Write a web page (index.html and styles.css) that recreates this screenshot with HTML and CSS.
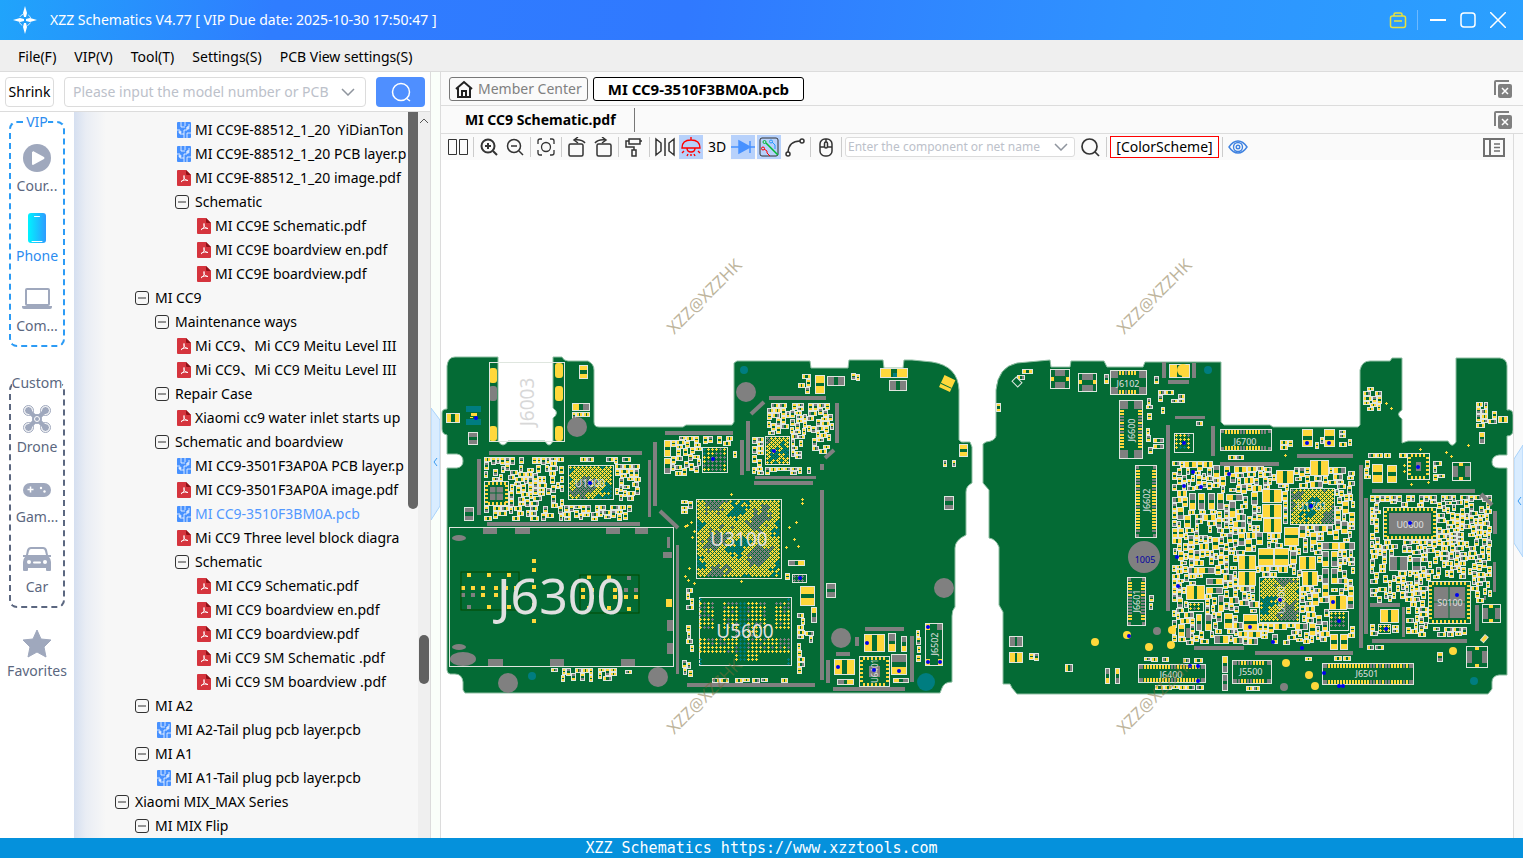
FILE: index.html
```html
<!DOCTYPE html>
<html lang="en">
<head>
<meta charset="utf-8">
<title>XZZ Schematics</title>
<link rel="stylesheet" href="styles.css">
</head>
<body>
<svg class="defs" aria-hidden="true">
  <symbol id="i-pcb" viewBox="0 0 14 16"><rect width="14" height="16" rx="1" fill="#4791ff"/><path d="M4 0v5h4M8 0v4M0 8h3M3 10v2h4V8h3M7 16v-4M10 16v-5h4M12 2v3h-2v3" fill="none" stroke="#fff" stroke-width=".8"/><circle cx="3" cy="10" r="1" fill="none" stroke="#fff"/><circle cx="11" cy="6" r="1" fill="#4791ff" stroke="#fff"/></symbol>
  <symbol id="i-pdf" viewBox="0 0 14 16"><path d="M1 0h8l5 5v10a1 1 0 0 1-1 1H1a1 1 0 0 1-1-1V1a1 1 0 0 1 1-1z" fill="#d5343d"/><path d="M9 0l5 5h-4a1 1 0 0 1-1-1z" fill="#8f1219"/><path d="M7 5.500c1 3-1 5-3 6.500M7 5.500c-1 3 2 5 4 5M4 11.500c2-1.500 4-2 7-1" fill="none" stroke="#fff" stroke-width="1"/></symbol>
  <symbol id="i-minus" viewBox="0 0 14 14"><rect x=".5" y=".5" width="13" height="13" rx="2.5" fill="none" stroke="#333"/><path d="M3 7h8" stroke="#333"/></symbol>
  <symbol id="i-closeall" viewBox="0 0 18 18"><path d="M1 15V2q0-1 1-1h13" fill="none" stroke="#808080" stroke-width="2"/><rect x="4" y="4" width="14" height="14" rx="2" fill="#808080"/><path d="M8 8l6 6m0-6l-6 6" stroke="#fff" stroke-width="1.500"/></symbol>
  <symbol id="i-chev" viewBox="0 0 14 8"><path d="M1 1l6 6 6-6" fill="none" stroke="#8f959e" stroke-width="1.500"/></symbol>
</svg>

<header class="titlebar">
  <svg class="logo" viewBox="0 0 24 30"><path d="M12 1l2 7-1 4h-2l-1-4zM12 29l2-7-1-4h-2l-1 4zM0 15l7-2 4 1v2l-4 1zM24 15l-7-2-4 1v2l4 1z" fill="#fff"/><circle cx="12" cy="15" r="6" fill="none" stroke="#d7ecff" stroke-dasharray="4 5.400" stroke-dashoffset="-2.700"/></svg>
  <h1>XZZ Schematics V4.77 [ VIP Due date: 2025-10-30 17:50:47 ]</h1>
  <div class="winbtns">
    <button aria-label="License"><svg width="18" height="18" viewBox="0 0 18 18" fill="none" stroke="#e9e23c" stroke-width="1.500"><rect x="1.500" y="5" width="15" height="11.500" rx="2"/><path d="M5 5V3.500q0-1.500 1.500-1.500h5q1.500 0 1.500 1.500V5M5 10h8"/></svg></button>
    <i class="winsep"></i>
    <button aria-label="Minimize"><svg width="16" height="16"><path d="M0 8h16" stroke="#fff" stroke-width="2"/></svg></button>
    <button aria-label="Maximize"><svg width="16" height="16"><rect x="1" y="1" width="14" height="14" rx="3" fill="none" stroke="#fff" stroke-width="1.500"/></svg></button>
    <button aria-label="Close"><svg width="16" height="16"><path d="M0 0l16 16M16 0L0 16" stroke="#fff" stroke-width="1.500"/></svg></button>
  </div>
</header>

<nav class="menubar">
  <button>File(F)</button><button>VIP(V)</button><button>Tool(T)</button><button>Settings(S)</button><button>PCB View settings(S)</button>
</nav>

<main class="main">
  <aside class="side">
    <form class="finder">
      <button type="button" class="shrink">Shrink</button>
      <label class="combo"><input aria-label="Model" placeholder="Please input the model number or PCB"><svg width="14" height="8"><use href="#i-chev"/></svg></label>
      <button type="button" class="go" aria-label="Search"><svg width="20" height="20" fill="none" stroke="#fff" stroke-width="1.500"><circle cx="10" cy="10" r="8.500"/><path d="M15 16l4 3"/></svg></button>
    </form>
    <div class="sidebody">
      <div class="rail">
        <fieldset class="group vip">
          <legend>VIP</legend>
          <button><svg viewBox="0 0 30 30"><circle cx="15" cy="15" r="14" fill="#9fa8bd"/><path d="M11 9q-1-1 0-1l11 6q1 1 0 2l-11 6q-1 0-1-1V9z" fill="#fff"/></svg>Cour...</button>
          <button class="on"><svg viewBox="0 0 30 30"><defs><linearGradient id="ph"><stop offset="0" stop-color="#00f3ff"/><stop offset="1" stop-color="#2e9bff"/></linearGradient></defs><rect x="6" y="0" width="18" height="30" rx="3" fill="url(#ph)"/><path d="M12.500 3.500h5M10 28.500h10" stroke="#fff" stroke-linecap="round"/></svg>Phone</button>
          <button><svg viewBox="0 0 30 30"><rect x="4" y="6" width="23" height="16" rx="1" fill="none" stroke="#9fa8bd" stroke-width="2"/><path d="M0 23h30v1q0 2-2 2H2q-2 0-2-2z" fill="#9fa8bd"/></svg>Com...</button>
        </fieldset>
        <fieldset class="group">
          <legend>Custom</legend>
          <button><svg viewBox="0 0 30 30" fill="#9fa8bd"><path d="M6 6l18 18M24 6L6 24" stroke="#9fa8bd" stroke-width="4"/><g stroke="#fff"><circle cx="6.500" cy="6.500" r="4"/><circle cx="23.500" cy="6.500" r="4"/><circle cx="6.500" cy="23.500" r="4"/><circle cx="23.500" cy="23.500" r="4"/></g><g fill="none" stroke="#9fa8bd"><circle cx="6.500" cy="6.500" r="5"/><circle cx="23.500" cy="6.500" r="5"/><circle cx="6.500" cy="23.500" r="5"/><circle cx="23.500" cy="23.500" r="5"/></g><path d="M8 8l14 14M22 8L8 22" stroke="#9fa8bd" stroke-width="4"/><circle cx="15" cy="15" r="5"/><circle cx="15" cy="15" r="2.500" stroke="#fff"/></svg>Drone</button>
          <button><svg viewBox="0 0 30 30"><rect x="1" y="9" width="28" height="14" rx="7" fill="#9fa8bd"/><path d="M5.500 15.500h6M8.500 12.500v6" stroke="#fff" stroke-width="1.500"/><circle cx="19" cy="14" r="1.200" fill="#fff"/><circle cx="22.500" cy="17.500" r="1.200" fill="#fff"/></svg>Gam...</button>
          <button><svg viewBox="0 0 30 30"><path d="M9 3h12q3 0 4 3l1 5h3v2h-2q2 2 2 5v8q0 1-1 1h-3q-1 0-1-1v-2H6v2q0 1-1 1H2q-1 0-1-1v-8q0-3 2-5H1v-2h3l1-5q1-3 4-3z" fill="#9fa8bd"/><path d="M9 5h12q1.500 0 2 2l1 4H6l1-4q.500-2 2-2z" fill="#fff"/><circle cx="7" cy="18" r="2" fill="#fff"/><circle cx="23" cy="18" r="2" fill="#fff"/><path d="M12 18.500h6" stroke="#fff" stroke-width="2" stroke-linecap="round"/></svg>Car</button>
        </fieldset>
        <button class="fav"><svg viewBox="0 0 30 30"><path d="M15 2l4 9 10 1-7 7 2 10-9-5-9 5 2-10-7-7 10-1z" fill="#9fa8bd" stroke="#9fa8bd" stroke-linejoin="round"/></svg>Favorites</button>
      </div>
      <ul class="tree">
        <li class="f d3"><svg><use href="#i-pcb"/></svg>MI CC9E-88512_1_20&nbsp; YiDianTon</li>
        <li class="f d3"><svg><use href="#i-pcb"/></svg>MI CC9E-88512_1_20 PCB layer.p</li>
        <li class="f d3"><svg><use href="#i-pdf"/></svg>MI CC9E-88512_1_20 image.pdf</li>
        <li class="d3"><svg><use href="#i-minus"/></svg>Schematic</li>
        <li class="f d4"><svg><use href="#i-pdf"/></svg>MI CC9E Schematic.pdf</li>
        <li class="f d4"><svg><use href="#i-pdf"/></svg>MI CC9E boardview en.pdf</li>
        <li class="f d4"><svg><use href="#i-pdf"/></svg>MI CC9E boardview.pdf</li>
        <li class="d1"><svg><use href="#i-minus"/></svg>MI CC9</li>
        <li class="d2"><svg><use href="#i-minus"/></svg>Maintenance ways</li>
        <li class="f d3"><svg><use href="#i-pdf"/></svg>Mi CC9、Mi CC9 Meitu Level III</li>
        <li class="f d3"><svg><use href="#i-pdf"/></svg>Mi CC9、Mi CC9 Meitu Level III</li>
        <li class="d2"><svg><use href="#i-minus"/></svg>Repair Case</li>
        <li class="f d3"><svg><use href="#i-pdf"/></svg>Xiaomi cc9 water inlet starts up</li>
        <li class="d2"><svg><use href="#i-minus"/></svg>Schematic and boardview</li>
        <li class="f d3"><svg><use href="#i-pcb"/></svg>MI CC9-3501F3AP0A PCB layer.p</li>
        <li class="f d3"><svg><use href="#i-pdf"/></svg>MI CC9-3501F3AP0A image.pdf</li>
        <li class="f d3 sel"><svg><use href="#i-pcb"/></svg>MI CC9-3510F3BM0A.pcb</li>
        <li class="f d3"><svg><use href="#i-pdf"/></svg>Mi CC9 Three level block diagra</li>
        <li class="d3"><svg><use href="#i-minus"/></svg>Schematic</li>
        <li class="f d4"><svg><use href="#i-pdf"/></svg>MI CC9 Schematic.pdf</li>
        <li class="f d4"><svg><use href="#i-pdf"/></svg>MI CC9 boardview en.pdf</li>
        <li class="f d4"><svg><use href="#i-pdf"/></svg>MI CC9 boardview.pdf</li>
        <li class="f d4"><svg><use href="#i-pdf"/></svg>Mi CC9 SM Schematic .pdf</li>
        <li class="f d4"><svg><use href="#i-pdf"/></svg>Mi CC9 SM boardview .pdf</li>
        <li class="d1"><svg><use href="#i-minus"/></svg>MI A2</li>
        <li class="f d2"><svg><use href="#i-pcb"/></svg>MI A2-Tail plug pcb layer.pcb</li>
        <li class="d1"><svg><use href="#i-minus"/></svg>MI A1</li>
        <li class="f d2"><svg><use href="#i-pcb"/></svg>MI A1-Tail plug pcb layer.pcb</li>
        <li class="d0"><svg><use href="#i-minus"/></svg>Xiaomi MIX_MAX Series</li>
        <li class="d1"><svg><use href="#i-minus"/></svg>MI MIX Flip</li>
      </ul>
      <div class="scroll inner"><i></i></div>
      <div class="scroll outer"><svg width="10" height="6"><path d="M1 5l4-4 4 4" fill="none" stroke="#555"/></svg><i></i></div>
    </div>
  </aside>

  <div class="splitter"><svg viewBox="0 0 9 112"><path d="M0 0l9 12v86l-9 14z" fill="#d9ecff" stroke="#a9d3fb"/><path d="M6 50l-3 4 3 4" fill="none" stroke="#3b9bf0"/></svg></div>

  <section class="work">
    <div class="tabs">
      <button class="tab home"><svg width="18" height="18" fill="none" stroke="#222" stroke-width="2"><path d="M1 9l8-7 8 7M3 8v9h12V8"/><path d="M7 17v-6h4v6"/></svg>Member Center</button>
      <button class="tab cur">MI CC9-3510F3BM0A.pcb</button>
      <button class="closeall" aria-label="Close all"><svg width="18" height="18"><use href="#i-closeall"/></svg></button>
    </div>
    <div class="subtabs">
      <button class="subtab">MI CC9 Schematic.pdf</button>
      <button class="closeall" aria-label="Close all documents"><svg width="18" height="18"><use href="#i-closeall"/></svg></button>
    </div>
    <div class="view">
      <div class="viewmain">
        <div class="tools">
          <button aria-label="Split view"><svg viewBox="0 0 20 20"><path d="M.5 2.500h8v15h-8zM11.500 2.500h8v15h-8z"/></svg></button><i></i>
          <button aria-label="Zoom in"><svg viewBox="0 0 20 20" stroke-width="2"><circle cx="9" cy="9" r="6.500"/><path d="M14 14l4 4M6 9h6M9 6v6"/></svg></button>
          <button aria-label="Zoom out"><svg viewBox="0 0 20 20" stroke-width="1.500"><circle cx="9" cy="9" r="6.500"/><path d="M14 14l4 4M6 9h6"/></svg></button><i></i>
          <button aria-label="Fit"><svg viewBox="0 0 20 20" stroke-width="1.300"><circle cx="10" cy="10" r="4.500"/><path d="M2 7V4q0-2 2-2h2M14 2h2q2 0 2 2v3M18 13v3q0 2-2 2h-2M6 18H4q-2 0-2-2v-3"/></svg></button><i></i>
          <button aria-label="Rotate right"><svg viewBox="0 0 20 20" stroke-width="1.500"><rect x="2" y="7" width="14" height="12" rx="1.500"/><path d="M18 6Q15 2 7 3M11 0L7 3l4 3"/></svg></button>
          <button aria-label="Rotate left"><svg viewBox="0 0 20 20" stroke-width="1.500"><rect x="4" y="7" width="14" height="12" rx="1.500"/><path d="M2 6q3-4 11-3M9 0l4 3-4 3"/></svg></button><i></i>
          <button aria-label="Paint"><svg viewBox="0 0 20 20" stroke-width="1.500"><path d="M5 2h11v5H5zM5 4H2v6h8v3M16 4h2M8 13h4v6H8z"/></svg></button><i></i>
          <button aria-label="Mirror"><svg viewBox="0 0 20 20" stroke-width="1.500"><path d="M1 2l5 4v8l-5 4zM19 2l-5 4v8l5 4zM10 1v18"/></svg></button>
          <button class="on light" aria-label="Light"><svg viewBox="0 0 20 20" stroke-width="1.400"><path d="M1 11q0-8 9-8t9 8zM10 3V0M6 11q0 4 4 4t4-4M3 14l-2 2M17 14l2 2M7 17l-1 2M13 17l1 2M10 17v2"/></svg></button>
          <button class="txt">3D</button>
          <button class="on diode" aria-label="Diode"><svg viewBox="0 0 24 20" stroke-width="1.500"><path d="M0 10h24M19 4v12"/><path d="M8 4l11 6-11 6z" fill="#4791ff"/></svg></button>
          <button class="on" aria-label="Nets"><svg viewBox="0 0 20 20"><rect x="1" y="1" width="18" height="18" rx="2"/><path d="M7 6l12 12" stroke="#0b3" stroke-width="1.500"/><circle cx="5.500" cy="5" r="1.500" stroke="#0b3"/><path d="M13 5l3 3v4" stroke="#29f"/><circle cx="12" cy="4.500" r="1.500" stroke="#29f"/><path d="M5 12l3 2v2l3 3" stroke="#f00"/><circle cx="4" cy="11.500" r="1.500" stroke="#f00"/></svg></button>
          <button aria-label="Curve"><svg viewBox="0 0 20 20" stroke-width="1.500"><path d="M3 15Q4 4 15 4"/><circle cx="3" cy="17" r="2"/><circle cx="17" cy="4" r="2"/></svg></button><i></i>
          <button aria-label="Mouse"><svg viewBox="0 0 20 20" stroke-width="1.500"><rect x="4" y="2" width="12" height="17" rx="5"/><path d="M4 10h4M12 10h4M10 2v3"/><rect x="8.500" y="5" width="3" height="6" rx="1.500"/></svg></button><i></i>
          <label class="combo net"><input aria-label="Component" placeholder="Enter the component or net name"><svg width="14" height="8"><use href="#i-chev"/></svg></label>
          <button class="find" aria-label="Find"><svg viewBox="0 0 20 20" stroke-width="1.700"><circle cx="9.500" cy="9.500" r="7.500"/><path d="M15 15l4 4"/></svg></button><i></i>
          <button class="scheme">[ColorScheme]</button><i></i>
          <button class="eye" aria-label="Show"><svg viewBox="0 0 20 20" stroke-width="1.400"><path d="M1 10q4-6 9-6t9 6q-4 6-9 6t-9-6z"/><circle cx="10" cy="10" r="4.500"/><circle cx="10" cy="10" r="1.800"/></svg></button>
          <button class="panel" aria-label="Panel"><svg viewBox="0 0 22 19" stroke-width="2"><path d="M1 1h20v17H1zM7 1v17"/><path d="M11 6h6M11 9.500h6M11 13h6" stroke-width="1.500"/></svg></button>
        </div>
        <svg class="board" id="board" viewBox="441 160 1072 678" role="img" aria-label="Board view"></svg>
      </div>
      <div class="edge"><svg viewBox="0 0 9 112"><path d="M9 0L0 14v84l9 14z" fill="#d9ecff" stroke="#a9d3fb"/><path d="M7 52l-3 4 3 4" fill="none" stroke="#3b9bf0"/></svg></div>
    </div>
  </section>
</main>
<footer class="foot">XZZ Schematics https://www.xzztools.com</footer>
<script src="board.js"></script>
</body>
</html>
```
FILE: styles.css
```css
:root { --ui: "Noto Sans", "Noto Sans CJK SC", sans-serif; --line: #dcdcdc; }
* { box-sizing: border-box; }
body { margin: 0; height: 100vh; display: flex; flex-direction: column; overflow: hidden; font: 14px/20px var(--ui); color: #000; background: #fafafa; }
button { font: inherit; color: inherit; background: none; border: 0; padding: 0; }
.defs { position: absolute; width: 0; height: 0; }

.titlebar { height: 40px; flex: none; display: flex; align-items: center; padding: 0 17px 0 13px; color: #fff; background: linear-gradient(100deg, #20a4fb 0, #2f7dff 18%, #3079ff 45%, #2f93ff 75%, #2aa0ff 100%); }
.logo { width: 24px; height: 30px; }
.titlebar h1 { margin: 0 auto 0 13px; font-size: 14px; font-weight: 400; }
.winbtns { display: flex; align-items: center; gap: 14px; }
.winbtns button, .closeall { display: flex; }
.winbtns button:first-child { margin-right: -4px; }
.winsep { width: 1px; height: 20px; background: #6db9ff; margin-right: -2px; }

.menubar { height: 32px; flex: none; display: flex; align-items: center; gap: 18px; padding: 2px 18px 0; background: #efefef; border-bottom: 1px solid var(--line); }

.main { flex: 1; min-height: 0; display: flex; }
.side { width: 431px; flex: none; display: flex; flex-direction: column; border-right: 1px solid var(--line); }
.finder { height: 40px; flex: none; display: flex; align-items: center; gap: 10px; padding: 0 5px; background: #fff; border-bottom: 1px solid var(--line); }
.shrink { width: 49px; height: 30px; border: 1px solid var(--line); border-radius: 4px; }
.combo { display: flex; align-items: center; height: 30px; flex: 1; min-width: 0; gap: 6px; padding: 0 10px 0 8px; border: 1px solid var(--line); border-radius: 4px; background: #fff; }
.combo svg { flex: none; }
.combo input { flex: 1; min-width: 0; border: 0; outline: 0; padding: 0; font: inherit; background: none; }
.combo input::placeholder { color: #bcc1ca; opacity: 1; }
.go { width: 49px; height: 30px; border-radius: 4px; background: #4f8fff; display: flex; align-items: center; justify-content: center; }

.sidebody { flex: 1; min-height: 0; display: flex; background: #f7f7f7; }
.rail { width: 74px; flex: none; display: flex; flex-direction: column; align-items: center; background: #fff; color: #5b6780; }
.rail button { display: flex; flex-direction: column; align-items: center; gap: 3px; width: 100%; height: 70px; padding-top: 10px; }
.rail svg { width: 30px; height: 30px; flex: none; }
.group { width: 56px; min-width: 0; margin: 0 0 26px; padding: 1px 0 2px; border: 2px dashed #5b6780; border-radius: 8px; }
.group legend { margin: 0 auto; padding: 0; }
.group.vip { border-color: #2c9bf5; }
.group.vip legend, .rail .on { color: #2c8cf0; }
.rail .fav { margin-top: -16px; }

.tree { flex: 1; min-width: 0; margin: 0; padding: 6px 0 0; list-style: none; overflow: hidden; background: linear-gradient(90deg, #d5dff0 0, #e9edf4 12px, #f7f7f7 32px); }
.tree li { display: flex; align-items: center; height: 24px; overflow: hidden; white-space: nowrap; }
.tree svg { width: 14px; height: 14px; flex: none; margin-right: 6px; }
.tree .f svg { height: 16px; margin: 0 4px 0 2px; }
.d0 { padding-left: 41px; } .d1 { padding-left: 61px; } .d2 { padding-left: 81px; } .d3 { padding-left: 101px; } .d4 { padding-left: 121px; }
.sel { color: #5298ff; }
.scroll { flex: none; display: flex; flex-direction: column; align-items: center; }
.inner { width: 11px; padding-left: 1px; }
.inner i { width: 100%; height: 397px; background: #666; border-radius: 0 0 5px 5px; }
.outer { width: 12px; background: #efefef; padding-top: 6px; }
.outer i { width: 10px; height: 49px; margin-top: 511px; border-radius: 5px; background: #606060; }

.splitter { width: 10px; flex: none; display: flex; align-items: center; background: #fafffa; border-right: 1px solid var(--line); }
.splitter svg { width: 9px; height: 112px; margin-top: 18px; }
.edge { width: 10px; flex: none; border-left: 1px solid var(--line); display: flex; align-items: center; }
.edge svg { width: 9px; height: 112px; margin-top: 30px; }

.work { flex: 1; min-width: 0; display: flex; flex-direction: column; }
.tabs { height: 34px; flex: none; display: flex; align-items: center; gap: 5px; padding: 0 11px 0 8px; border-bottom: 1px solid var(--line); }
.tab { display: flex; align-items: center; height: 24px; border: 1px solid #777; border-radius: 3px; }
.home { padding: 0 5px; gap: 5px; color: #808080; }
.cur { padding: 0 14px; font-size: 15px; font-weight: 700; border-color: #000; background: #fff; }
.closeall { margin-left: auto; }
.subtabs { height: 28px; flex: none; display: flex; align-items: center; padding: 0 11px 0 24px; border-bottom: 1px solid var(--line); }
.subtab { height: 24px; padding-right: 18px; font-weight: 700; border-right: 1px solid #777; }

.view { flex: 1; min-height: 0; display: flex; }
.viewmain { flex: 1; min-width: 0; display: flex; flex-direction: column; }
.tools { height: 26px; flex: none; display: flex; align-items: center; padding: 0 6px 0 4px; }
.tools > i { width: 1px; height: 20px; margin: 0 2px; background: #ccc; }
.tools button { width: 24px; height: 24px; margin: 0 1px; display: flex; align-items: center; justify-content: center; flex: none; }
.tools svg { width: 20px; height: 20px; fill: none; stroke: #333; }
.tools .on { background: #b7d1fb; }
.tools .light svg { stroke: #f00; }
.tools .diode svg { stroke: #4791ff; width: 24px; }
.tools .eye svg { stroke: #3f82e0; }
.tools .net { flex: none; width: 230px; height: 20px; font-size: 12px; padding: 0 6px 0 2px; margin: 0 1px; border-radius: 3px; }
.tools .net svg { width: 14px; height: 8px; }
.tools .find { margin: 0 2px; }
.tools .scheme { width: 109px; height: 22px; border: 1px solid #f00; background: #fff; }
.tools .panel { margin-left: auto; }
.tools .panel svg { width: 22px; height: 19px; stroke: #707070; }
.board { flex: 1; min-height: 0; width: 100%; background: #fff; font-family: var(--ui); }

.foot { height: 20px; flex: none; background: #0591dc; color: #fff; text-align: center; font: 15px/20px "DejaVu Sans Mono", monospace; }
```
FILE: board.js
```js
const svg = document.getElementById("board");
const NS = "http://www.w3.org/2000/svg";
const X0 = 441, Y0 = 340, W = 1080, H = 370;
const used = new Uint8Array(W * H);
const G = "#046b35", YL = "#ffd83b", GR = "#808080", TL = "#007d80", WH = "#dfe6df";
const layers = { frame: "", body: "", gray: "", yellow: "", teal: "" };

let seed = 7;
const rnd = () => (seed = (seed * 1103515245 + 12345) % 2147483648) / 2147483648;
const pick = a => a[Math.floor(rnd() * a.length)];

function add(tag, attrs, text) {
  const e = document.createElementNS(NS, tag);
  for (const k in attrs) e.setAttribute(k, attrs[k]);
  if (text) e.textContent = text;
  svg.appendChild(e);
}
function box(layer, x, y, w, h) { layers[layer] += `M${x} ${y}h${w}v${h}h${-w}z`; }
function mark(x, y, w, h) {
  for (let j = y; j < y + h; j++) for (let i = x; i < x + w; i++)
    if (i >= X0 && i < X0 + W && j >= Y0 && j < Y0 + H) used[(j - Y0) * W + i - X0] = 1;
}
function free(x, y, w, h) {
  for (let j = y; j < y + h; j++) for (let i = x; i < x + w; i++)
    if (used[(j - Y0) * W + i - X0]) return false;
  return true;
}
/* Two-pad part: white outline, pads at both ends of the long side. */
function part(x, y, w, h, kind, axis) {
  box("frame", x, y, w, h);
  box("body", x + 1, y + 1, w - 2, h - 2);
  const c = { y: ["yellow", "yellow"], g: ["gray", "gray"], m: ["gray", "yellow"], n: ["yellow", "gray"] }[kind];
  const horiz = axis ? axis === "h" : w >= h;
  const len = (horiz ? w : h) - 2, p = Math.max(len > 4 ? 2 : 1, Math.floor(len * (w * h > 150 ? 0.42 : 0.4)));
  if (horiz) { box(c[0], x + 1, y + 1, p, h - 2); box(c[1], x + w - 1 - p, y + 1, p, h - 2); }
  else { box(c[0], x + 1, y + 1, w - 2, p); box(c[1], x + 1, y + h - 1 - p, w - 2, p); }
  mark(x, y, w, h);
}
function field(x, y, w, h, big) {
  const small = [[7, 4], [4, 7], [8, 5], [5, 7], [7, 5], [5, 8], [9, 5]];
  const large = [[7, 13], [13, 7], [10, 6], [6, 10], [10, 7]];
  for (let j = y; j < y + h - 2; j++) for (let i = x; i < x + w - 2; i++) {
    if (!free(i, j, 3, 3)) continue;
    const [a, b] = pick(big && rnd() < 0.4 ? large : small);
    if (i + a > x + w || j + b > y + h || !free(i, j, a, b)) continue;
    if (rnd() < 0.25) { mark(i, j, 4, 4); continue; }
    part(i, j, a, b, pick(["y", "y", "y", "m", "n", "n", "m", "y"]));
  }
}
function plus(layer, x, y) { box(layer, x, y + 1, 3, 1); box(layer, x + 1, y, 1, 3); }
function bga(x, y, w, h, pitch, stagger) {
  box("frame", x, y, w, h); box("body", x + 1, y + 1, w - 2, h - 2);
  let r = 0;
  for (let j = y + 1; j < y + h - 3; j += stagger ? 2 : pitch, r++)
    for (let i = x + 1 + (stagger && r % 2 ? 2 : 0); i < x + w - 3; i += pitch) {
      const n = Math.sin(i / 7) + Math.cos(j / 6 + i / 13) + rnd() * 1.6 - 0.8;
      plus(n > 0.9 ? "gray" : n < -1.3 ? "teal" : "yellow", i, j);
    }
  mark(x, y, w, h);
}
/* Connector: outlined body with a row of pins along both long sides. */
function conn(x, y, w, h, corner) {
  box("frame", x, y, w, h); box("body", x + 1, y + 1, w - 2, h - 2);
  const hz = w > h, n = hz ? w : h;
  for (let k = corner + 2; k < n - corner - 3; k += 3) {
    const c = rnd() < 0.3 ? "gray" : "yellow";
    if (hz) { box(c, x + k, y + 1, 2, 4); box(c, x + k, y + h - 5, 2, 4); }
    else { box(c, x + 1, y + k, 4, 2); box(c, x + w - 5, y + k, 4, 2); }
  }
  for (const [a, b] of [[x + 1, y + 1], [x + w - 1 - corner, y + 1], [x + 1, y + h - 1 - corner], [x + w - 1 - corner, y + h - 1 - corner]])
    box("gray", a, b, corner, corner);
  mark(x, y, w, h);
}
function qfn(x, y, w, h, inset) {
  box("frame", x, y, w, h); box("body", x + 1, y + 1, w - 2, h - 2);
  for (let i = x + 4; i < x + w - 4; i += 4) { box("yellow", i, y + 1, 2, 3); box("yellow", i, y + h - 4, 2, 3); }
  for (let j = y + 4; j < y + h - 4; j += 4) { box("yellow", x + 1, j, 3, 2); box("yellow", x + w - 4, j, 3, 2); }
  box("gray", x + inset, y + inset, w - inset * 2, h - inset * 2);
  mark(x, y, w, h);
}
/* Coax socket: two gray ground pads, two small signal pads across them. */
function coax(x, y, s, vertical) {
  box("frame", x, y, s, s); box("body", x + 1, y + 1, s - 2, s - 2);
  const a = Math.floor(s / 4), m = s - 2 * a, q = Math.floor(s / 2) - 2;
  if (vertical) { box("gray", x + a, y + 1, m, 6); box("gray", x + a, y + s - 7, m, 6); box("yellow", x + 1, y + q, 3, 4); box("yellow", x + s - 4, y + q, 3, 4); }
  else { box("gray", x + 1, y + a, 5, m); box("gray", x + s - 6, y + a, 5, m); box("yellow", x + q, y + 1, 4, 3); box("yellow", x + q, y + s - 4, 4, 3); }
  mark(x, y, s, s);
}

const outlines = [
  "M447 366Q448 357 455 357H498V441Q503 449 508 441H545Q549 449 553 441V418Q560 413 553 408V357H562Q564 361 568 361H588Q594 364 594 370V422Q594 427 599 427H683L686 425H732L734 422V363L737 361H810L811 368H848L849 360H883L884 368H903L904 360H912L932 362Q958 366 959 390V440Q961 443 965 442H970L972 447V483Q966 486 966 492V535Q955 540 955 548V607Q952 610 952 616V682Q944 682 942 688L940 693H465L463 690V682Q462 674 455 674H450Q447 673 447 670V468H457Q463 467 463 461T457 454H447V435Q442 434 442 429V413Q442 409 447 409Z",
  "M996 390Q998 367 1017 363L1050 360L1051 367H1070L1071 361H1104L1107 367H1143L1145 362H1221V422L1224 425H1270L1273 427H1358L1360 425V370Q1362 361 1370 361H1390L1392 358H1402V410Q1395 414 1402 419V443L1408 441H1448Q1452 449 1456 442V358H1500Q1507 359 1507 366V410Q1513 409 1513 415V430Q1513 436 1507 436V455H1499Q1492 456 1492 462T1499 468H1507V675H1499Q1492 676 1492 682V689L1488 694H1017L1012 688L1010 684H1003V612L999 605V547Q996 539 989 538V490L983 483V444L986 442Q995 441 996 436Z"
];
outlines.forEach(d => add("path", { d, fill: G, stroke: "#8fbfa3", "stroke-width": 1 }));

/* Shield frames and slots. */
const bars = [[489,451,153,4],[477,459,4,56],[487,522,153,4],[648,460,3,57],[653,442,4,64],[665,431,68,4],[676,545,3,129],[687,683,128,4],[769,396,57,4],[835,403,4,40],[746,421,4,50],[740,440,4,35],[755,476,61,3],[754,481,59,4],[820,464,4,6],[820,490,4,190],[865,627,39,4],[855,637,4,9],[836,652,14,4],[826,660,4,23],[910,636,4,46],[833,687,72,4],[1162,362,4,16],[1192,363,4,15],[1168,380,21,4],[1175,416,30,3],[1166,425,4,186],[1211,426,4,30],[1220,462,59,4],[1186,628,4,10],[1194,646,50,4],[1297,454,56,4],[1359,465,4,183],[1364,498,4,136],[1372,489,103,4],[1493,511,4,23],[1493,562,3,30],[1475,605,4,26],[1370,603,30,4],[1402,607,3,30],[1372,639,95,4],[1255,651,98,4],[1484,596,2,4]];
bars.forEach(b => { box("gray", ...b); mark(...b); });

/* SIM tray J6300. */
box("frame", 449, 527, 225, 140); box("body", 450, 528, 223, 138); mark(449, 527, 225, 140);
[[483,528,14,6],[515,528,15,6],[606,528,14,6],[635,528,13,6],[488,659,15,7],[550,659,14,7],[621,659,14,7],[667,537,3,11],[663,552,9,6],[667,620,6,11],[667,643,6,11]].forEach(b => box("gray", ...b));
box("yellow", 666, 599, 6, 8);
[[467,573],[487,573],[507,573],[461,586],[471,586],[481,586],[494,586],[504,586],[514,586],[481,593],[494,593],[487,605],[507,605],[532,559],[532,568],[532,585],[532,603],[532,619],[587,575],[607,575],[581,588],[590,588],[613,588],[581,595],[590,595],[613,595],[624,595],[634,595],[587,606],[607,606],[627,607]].forEach(p => box("yellow", p[0], p[1], 4, 4));
[[461,593],[471,593],[467,605],[627,576],[624,588],[634,588]].forEach(p => box("gray", p[0], p[1], 4, 4));

/* Individually placed parts: x, y, w, h, pads, axis. */
const parts = [[579,365,9,14,"y"],[572,403,18,8,"n"],[446,413,14,10,"y"],[468,432,10,13,"g"],[464,507,10,14,"g"],
[815,375,10,19,"y"],[827,376,18,10,"g"],[880,368,28,10,"y"],[889,380,18,11,"g"],[959,444,9,13,"y"],[944,496,10,14,"g"],[800,586,15,20,"y"],[788,560,17,6,"m"],[826,583,10,15,"g"],[811,607,6,16,"n"],
[864,634,21,18,"y"],[888,633,8,19,"m"],[901,636,6,16,"m"],[834,659,21,16,"y"],[891,654,16,21,"m"],[837,679,17,6,"m"],[893,678,16,5,"n"],
[1104,374,5,10,"m"],[996,403,5,9,"y"],[1022,369,11,5,"y"],[1009,636,14,11,"g"],[1009,652,14,11,"y"],[1065,664,8,8,"n"],[1105,668,5,16,"m"],[1115,668,5,16,"n"],[1169,364,21,14,"y"],[1153,438,11,5,"n"],[1153,444,11,5,"n"],
[1302,429,11,18,"y"],[1324,429,11,18,"y"],[1310,460,19,16,"y","h"],[1276,470,18,14,"y"],[1262,489,20,14,"y"],[1262,504,20,14,"y"],[1263,518,19,15,"y"],[1284,527,15,19,"y","v"],[1258,548,16,18,"y","v"],[1274,548,15,18,"y","v"],[1299,556,17,14,"y"],[1302,571,16,15,"y"],[1329,595,18,15,"y"],[1238,555,18,15,"y"],[1238,571,18,15,"y"],[1243,614,15,17,"y","v"],[1186,585,19,15,"y"],
[1189,493,7,17,"m"],[1198,493,7,17,"n"],[1208,493,7,17,"m"],[1217,493,7,17,"n"],[1229,501,7,17,"m"],[1226,494,17,7,"n"],[1322,551,7,16,"m"],[1331,551,7,16,"n"],[1322,568,7,16,"g"],[1331,568,7,16,"m"],[1322,542,17,8,"m"],[1339,542,16,8,"n"],[1330,634,8,16,"y"],[1340,634,8,16,"y"],
[1206,578,17,7,"m"],[1206,587,17,7,"n"],[1198,567,17,7,"n"],[1218,595,6,17,"m"],[1196,614,6,17,"n"],[1205,614,7,17,"m"],[1224,613,9,16,"y"],[1214,635,15,9,"m"],[1222,656,6,17,"n"],[1222,674,6,17,"g"],
[1372,464,11,19,"y"],[1387,465,10,18,"y"],[1380,609,19,14,"y"],[1437,652,6,10,"n"],[1498,416,10,7,"y"],[1479,432,6,12,"n"],[1389,556,19,15,"g"],[1412,557,9,14,"g"]];
parts.forEach(p => part(...p));
coax(1050, 369, 20, true); coax(1078, 373, 19, true); coax(1452, 462, 19); coax(1482, 604, 19); coax(1466, 646, 22);

bga(568, 465, 46, 35, 4, true); bga(696, 499, 86, 80, 4, true); bga(702, 447, 26, 26, 4); bga(765, 436, 25, 29, 4, true); bga(792, 574, 15, 9, 4);
bga(1174, 433, 20, 20, 4); bga(1290, 488, 45, 37, 4, true); bga(1259, 577, 41, 46, 4, true); bga(1329, 611, 20, 20, 4); bga(1188, 602, 16, 10, 4); bga(1378, 624, 13, 10, 4);
qfn(484, 481, 25, 25, 6); qfn(859, 656, 31, 31, 10); qfn(1383, 507, 54, 33, 6); qfn(1428, 581, 43, 43, 6); qfn(1407, 453, 23, 27, 9);
conn(1110, 370, 37, 25, 7); conn(1119, 400, 24, 59, 8); conn(1135, 465, 22, 73, 3); conn(1127, 577, 19, 49, 3); conn(1138, 664, 68, 19, 4); conn(1220, 429, 52, 22, 3); conn(1232, 660, 40, 24, 4); conn(1322, 663, 92, 22, 4);
box("frame", 925, 623, 18, 43); box("body", 926, 624, 16, 41); mark(925, 623, 18, 43);
box("yellow", 926, 624, 4, 6); box("yellow", 926, 659, 4, 6); box("yellow", 938, 659, 4, 6); box("gray", 937, 624, 5, 6);

/* Memory U5600: sparse ball pattern with blank columns. */
box("frame", 699, 597, 93, 69); box("body", 700, 598, 91, 67); mark(699, 597, 93, 69);
for (let j = 0; j < 17; j++) for (let i = 0; i < 23; i++) {
  const top = j > 0 && j < 8 && !(i > 3 && i < 6) && !(i > 16 && i < 19), low = j > 9 && j < 14, mid = j > 7 && j < 16 && i > 8 && i < 15, corner = (j === 0 || j > 14) && (i === 0 || i === 22);
  if (top || low || mid || corner) plus(corner || (i > 9 && i < 12) ? "teal" : rnd() < 0.3 ? "gray" : "yellow", 699 + i * 4, 598 + j * 4);
}
[[686,524],[690,521],[693,530],[684,525],[691,536],[688,567],[684,575],[687,579],[693,582],[801,498],[801,502],[795,521],[788,526],[793,538],[797,545],[785,546],[730,493],[740,580],[1284,454],[1419,448],[1445,451],[1450,455],[1467,444],[1390,407],[1385,402],[1403,464],[1403,470],[1410,483],[1427,481]].forEach(p => plus("yellow", p[0], p[1]));

/* Densely populated areas. */
[[484,457,80,64],[557,457,76,7],[615,464,26,38],[549,505,84,16],[671,436,31,40],[698,436,36,10],[732,443,7,30],[681,500,13,16],[686,588,8,68],[682,660,11,18],[797,613,8,62],[805,631,10,12],[785,573,7,11],[712,678,76,5],[551,668,43,14],[598,668,20,14],[625,670,16,6],[798,374,16,20],[851,373,10,10],[767,403,23,32],[788,403,46,32],[752,437,12,38],[791,433,15,26],[765,467,48,8],[812,425,20,30],[927,450,9,8],[943,460,13,7],[785,540,7,4],[572,412,18,7],[457,426,7,4],[916,628,5,41],
[1017,375,21,5],[1029,653,10,8],[1146,398,7,56],[1154,376,7,11],[1158,390,28,13],[1156,403,10,13],[1148,585,6,27],[1143,657,28,7],[1183,658,24,6],[1143,685,62,6],[1194,421,14,5],[1227,455,20,6],[1280,440,18,11],[1315,437,9,13],[1339,430,13,20],[1363,387,22,24],[1476,402,12,28],[1488,408,10,16],[1364,453,43,7],[1364,460,7,19],[1433,457,12,26],[1366,645,20,5],[1305,657,16,5],[1330,656,22,5],[1433,627,37,10],[1246,686,20,6]].forEach(f => field(...f));
part(664, 440, 7, 17, "y"); part(664, 458, 7, 16, "n");
field(1172, 461, 92, 184, true); field(1250, 467, 105, 178, true);
field(1370, 495, 122, 108); field(1370, 578, 58, 24); field(1406, 600, 22, 37); field(1370, 624, 8, 13); field(1392, 625, 10, 12);

const fills = { frame: WH, body: G, gray: GR, yellow: YL, teal: TL };
for (const k in layers) add("path", { d: layers[k], fill: fills[k], "shape-rendering": "crispEdges" });

[[660,511,678,528],[751,414,764,402],[825,458,834,450],[1481,494,1492,505]].forEach(l => add("line", { x1: l[0], y1: l[1], x2: l[2], y2: l[3], stroke: GR, "stroke-width": 4 }));
[[461,572,58,38],[580,575,59,38]].forEach(r => add("rect", { x: r[0], y: r[1], width: r[2], height: r[3], fill: "none", stroke: "#034a00" }));
add("path", { d: "M496 485v15M488 493h17", stroke: G });
add("path", { d: "M1449 586v32M1433 602h32", stroke: G });
[[577,427,10],[508,683,10],[658,677,10],[746,392,10],[944,588,10],[841,638,10],[1144,557,16],[1157,631,4],[1284,687,4]].forEach(c => add("circle", { cx: c[0], cy: c[1], r: c[2], fill: GR }));
[[926,682,9],[744,370,4],[532,676,4],[1208,370,4],[1474,681,4]].forEach(c => add("circle", { cx: c[0], cy: c[1], r: c[2], fill: TL }));
[[1183,370,6],[1095,642,4],[1127,635,4],[1172,630,4],[1149,647,4],[1171,645,4],[1286,663,4],[1309,675,4],[1315,686,4],[1453,651,4]].forEach(c => add("circle", { cx: c[0], cy: c[1], r: c[2], fill: YL }));
[[459,538,7,3],[459,647,7,3],[463,659,13,7]].forEach(c => add("ellipse", { cx: c[0], cy: c[1], rx: c[2], ry: c[3], fill: GR }));
[[489,368,YL],[489,386,GR],[489,426,YL],[555,363,YL],[555,386,YL],[555,426,YL]].forEach(p => add("rect", { x: p[0], y: p[1], width: 8, height: 15, rx: 3, fill: p[2] }));
add("rect", { x: 489, y: 362, width: 75, height: 79, fill: "none", stroke: WH, "shape-rendering": "crispEdges" });
[[466,406],[466,419]].forEach(p => add("rect", { x: p[0], y: p[1], width: 15, height: 6, fill: TL }));
add("path", { d: "M471 413h6v3h-6zM470 417h3v1h-3z", fill: YL });
add("rect", { x: 941, y: 377, width: 12, height: 13, fill: YL, transform: "rotate(25 947 384)" });
add("path", { d: "M941 386h12", stroke: G, "stroke-width": 1, transform: "rotate(25 947 384)" });
add("rect", { x: 1013, y: 379, width: 8, height: 6, fill: G, stroke: WH, transform: "rotate(45 1017 382)" });
add("rect", { x: 1481, y: 637, width: 7, height: 4, fill: YL, stroke: WH, transform: "rotate(-50 1484 639)" });
add("rect", { x: 893, y: 373, width: 4, height: 4, fill: TL });

/* Silkscreen labels: text, centre x, centre y, size, rotated. */
[["U1000",590,483,10],["U3100",739,539,19],["U5600",745,631,19],["J6502",934,644,9,1],["U6401",874,671,8,1],["J6102",1128,383,9],["J6600",1131,430,9,1],["J6602",1146,500,9,1],["J6601",1136,601,9,1],["J6400",1171,674,9],["J6700",1245,441,9],["J5500",1251,671,9],["J6501",1367,673,9],["U0600",1410,524,9],["S0100",1450,602,9],["U1701",1312,506,10],["U5000",1281,600,9,1],["J6300",561,595,50]].forEach(([t, x, y, s, r]) =>
  add("text", { x, y, "font-size": s, fill: "#e0e0e0", "text-anchor": "middle", "dominant-baseline": "central", transform: r ? `rotate(-90 ${x} ${y})` : "" }, t));
add("text", { x: 527, y: 402, "font-size": 19, fill: "#d8d8d8", "text-anchor": "middle", "dominant-baseline": "central", transform: "rotate(-90 527 402)" }, "J6003");
add("text", { x: 1145, y: 559, "font-size": 9, fill: "#0000a0", "text-anchor": "middle", "dominant-baseline": "central" }, "1005");

[[476,418],[590,483],[713,459],[774,451],[800,578],[867,643],[838,667],[874,670],[899,671],[928,627],[928,662],[940,662],[1184,443],[1193,472],[1184,486],[1201,487],[1229,474],[1177,557],[1178,586],[1129,636],[1190,666],[1198,666],[1198,681],[1250,627],[1307,443],[1329,443],[1311,506],[1280,600],[1333,602],[1339,621],[1273,642],[1302,648],[1324,673],[1339,686],[1343,686],[1418,467],[1410,523],[1457,595],[1386,629]].forEach(c => add("circle", { cx: c[0], cy: c[1], r: 2, fill: "#0000f0" }));

[[704,296],[1154,296],[704,696],[1154,696]].forEach(([x, y]) =>
  add("text", { x, y, "font-size": 17, fill: "#7d6b3a", "fill-opacity": 0.5, "text-anchor": "middle", "dominant-baseline": "central", transform: `rotate(-45 ${x} ${y})` }, "XZZ@XZZHK"));
```
